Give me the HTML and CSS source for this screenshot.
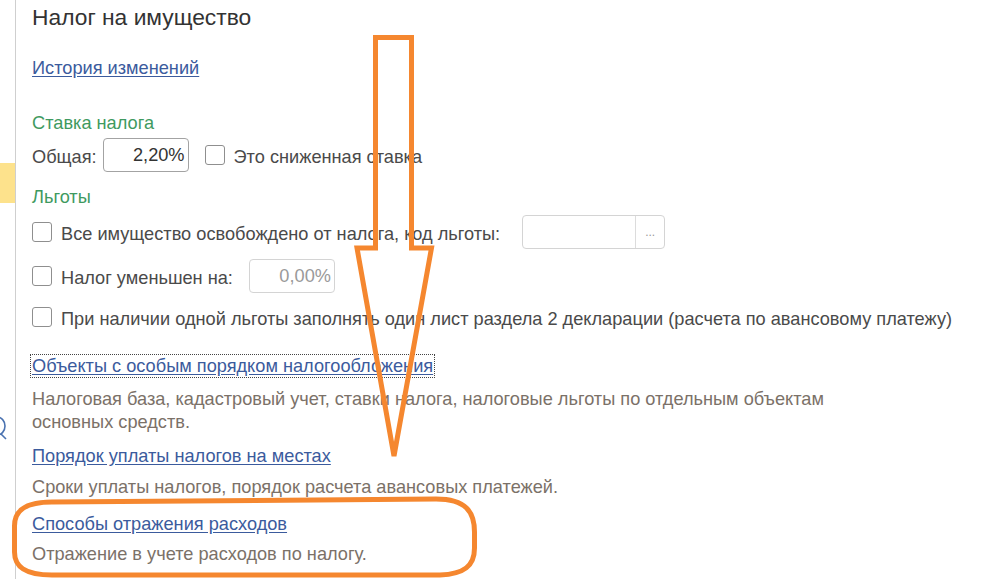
FILE: index.html
```html
<!DOCTYPE html>
<html lang="ru">
<head>
<meta charset="utf-8">
<title>Налог на имущество</title>
<link rel="stylesheet" href="styles.css">
</head>
<body>
<div class="page">
  <aside class="side">
    <div class="side-hl"></div>
    <div class="side-icon">
      <svg width="8" height="26" viewBox="0 0 8 26"><path d="M-3 2 A8 9 0 0 1 -3 20" fill="none" stroke="#4a72b0" stroke-width="1.6"/><path d="M1 19 L6 24" stroke="#4a72b0" stroke-width="1.6"/></svg>
    </div>
  </aside>
  <main class="main">
    <h1 class="title">Налог на имущество</h1>
    <div class="row-link first"><a class="link" href="#">История изменений</a></div>

    <div class="group-title g1">Ставка налога</div>
    <div class="row r-rate">
      <span class="lbl">Общая:</span>
      <div class="input in-rate">2,20%</div>
      <span class="cb cb-rate"></span>
      <span class="lbl">Это сниженная ставка</span>
    </div>

    <div class="group-title g2">Льготы</div>
    <div class="row r1">
      <span class="cb"></span>
      <span class="lbl">Все имущество освобождено от налога, код льготы:</span>
      <div class="input in-code"><span class="in-field"></span><span class="in-btn">...</span></div>
    </div>
    <div class="row r2">
      <span class="cb"></span>
      <span class="lbl">Налог уменьшен на:</span>
      <div class="input in-red">0,00%</div>
    </div>
    <div class="row r3">
      <span class="cb"></span>
      <span class="lbl">При наличии одной льготы заполнять один лист раздела 2 декларации (расчета по авансовому платежу)</span>
    </div>

    <div class="row-link sec1"><a class="link focused" href="#">Объекты с особым порядком налогообложения</a></div>
    <p class="desc d1">Налоговая база, кадастровый учет, ставки налога, налоговые льготы по отдельным объектам основных средств.</p>

    <div class="row-link sec2"><a class="link" href="#">Порядок уплаты налогов на местах</a></div>
    <p class="desc d2">Сроки уплаты налогов, порядок расчета авансовых платежей.</p>

    <div class="row-link sec3"><a class="link" href="#">Способы отражения расходов</a></div>
    <p class="desc d3">Отражение в учете расходов по налогу.</p>
  </main>
</div>
<svg class="annot" width="987" height="579" viewBox="0 0 987 579">
  <path d="M375.5 37.5 L411.5 37.5 L411.5 248 L431.5 248 L394 456 L357 248 L375.5 248 Z" fill="none" stroke="#f5872f" stroke-width="5" stroke-linejoin="miter"/>
  <path d="M52 502 L436 499 C466 499 474.5 512 474.5 532 L474.5 548 C474.5 566 464 574 440 575 L52 575 C24 575 14.5 566 14.5 552 L14.5 526 C14.5 510 26 502 52 502 Z" fill="none" stroke="#f5872f" stroke-width="5"/>
</svg>
</body>
</html>
```

FILE: styles.css
```css
html, body {
  margin: 0;
  padding: 0;
  background: #ffffff;
}
body {
  width: 987px;
  height: 579px;
  overflow: hidden;
  position: relative;
  font-family: "Liberation Sans", Arial, sans-serif;
  font-size: 18.2px;
  color: #4a4a4a;
}
.page {
  display: flex;
  height: 579px;
}
.side {
  width: 15px;
  flex: none;
  border-right: 1px solid #cfcfcf;
  display: flex;
  flex-direction: column;
  overflow: hidden;
}
.side-hl {
  margin-top: 163px;
  height: 40px;
  background: #fde28c;
}
.side-icon {
  margin-top: 212px;
  height: 26px;
}
.side-icon svg { display: block; }
.main {
  padding-left: 16px;
  flex: 1;
}
.title {
  margin: 0;
  font-size: 22.8px;
  font-weight: normal;
  line-height: 34px;
  color: #333333;
}
.row-link {
  height: 24px;
  line-height: 24px;
}
.link {
  color: #3b5b9d;
  text-decoration: underline;
  text-underline-offset: 2px;
}
.link.focused {
  outline: 1px dotted #444;
  outline-offset: 1px;
}
.first { margin-top: 22px; }
.group-title {
  height: 24px;
  line-height: 24px;
  color: #3f9a5f;
}
.g1 { margin-top: 31px; }
.g2 { margin-top: 13px; }
.row {
  display: flex;
  align-items: center;
  height: 34px;
  line-height: 24px;
}
.row .lbl { padding-top: 3px; }
.r-rate { margin-top: 3px; }
.r1 { margin-top: 6px; }
.r2 { margin-top: 10px; }
.r3 { margin-top: 7px; }
.cb {
  width: 18px;
  height: 18px;
  border: 1px solid #8f8f8f;
  border-radius: 3px;
  flex: none;
  margin-right: 9px;
  background: #fff;
}
.cb-rate { margin-left: 16px; }
.input {
  height: 32px;
  border: 1px solid #a3a3a3;
  border-radius: 4px;
  box-sizing: content-box;
  display: flex;
  align-items: center;
  justify-content: flex-end;
  padding-right: 3px;
  padding-top: 0;
}
.in-rate {
  width: 81px;
  margin-left: 6px;
  color: #333;
}
.in-red {
  width: 81px;
  margin-left: 16px;
  border-color: #d4d4d4;
  color: #9a9a9a;
}
.in-code {
  width: 141px;
  margin-left: 22px;
  border-color: #d4d4d4;
  padding-right: 0;
  justify-content: flex-start;
}
.in-field {
  width: 112px;
  height: 32px;
  border-right: 1px solid #dcdcdc;
}
.in-btn {
  flex: 1;
  text-align: center;
  font-size: 12px;
  color: #9a9a9a;
  line-height: 32px;
}
.desc {
  margin: 0;
  line-height: 23px;
  color: #7b7168;
  max-width: 830px;
}
.sec1 { margin-top: 20px; }
.d1 { margin-top: 10px; }
.sec2 { margin-top: 10px; }
.d2 { margin-top: 8px; }
.sec3 { margin-top: 13px; }
.d3 { margin-top: 7px; }
.annot {
  position: absolute;
  left: 0;
  top: 0;
  pointer-events: none;
}
```
